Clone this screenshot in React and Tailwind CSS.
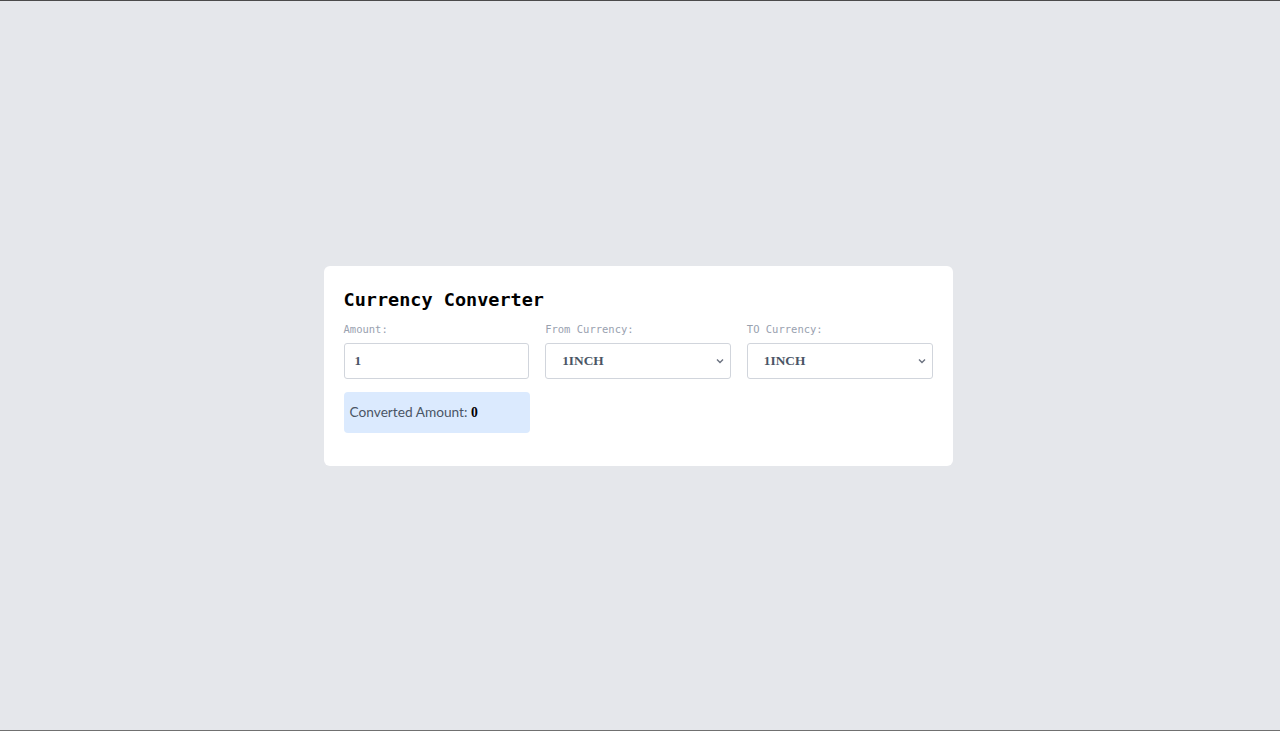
import { useState } from "react";

const currencies = ["1INCH", "AAVE", "ADA", "BTC", "ETH", "EUR", "USD"];

function Chevron() {
  return (
    <svg
      className="pointer-events-none absolute right-[7px] top-[15px]"
      width="8"
      height="6"
      viewBox="0 0 8 6"
      fill="none"
    >
      <path d="M1 1.5L4 4.5L7 1.5" stroke="#6b7280" strokeWidth="1.4" />
    </svg>
  );
}

export default function App() {
  const [amount, setAmount] = useState("1");
  const [from, setFrom] = useState("1INCH");
  const [to, setTo] = useState("1INCH");

  return (
    <div className="box-border flex h-screen items-center justify-center border-t border-b border-t-[#4b4b4b] border-b-[#707070] bg-[#e5e7eb] font-['Liberation_Serif',serif]">
      <div className="mr-[4px] w-[629px] rounded-md bg-white pt-5 pr-5 pb-[33px] pl-5">
        <h1 className="font-['DejaVu_Sans_Mono',monospace] text-[18.5px] font-bold leading-7 text-black">
          Currency Converter
        </h1>

        <div className="mt-[7px] grid grid-cols-3 gap-4">
          <div>
            <label className="block font-['DejaVu_Sans_Mono',monospace] text-[10.5px] leading-4 text-gray-400">
              Amount:
            </label>
            <input
              value={amount}
              onChange={(e) => setAmount(e.target.value)}
              className="mt-[6px] h-9 w-full rounded-[3px] border border-gray-300 px-[10px] text-[13.33px] font-bold text-gray-600 outline-none"
            />
          </div>

          <div>
            <label className="block font-['DejaVu_Sans_Mono',monospace] text-[10.5px] leading-4 text-gray-400">
              From Currency:
            </label>
            <div className="relative mt-[6px]">
              <select
                value={from}
                onChange={(e) => setFrom(e.target.value)}
                className="h-9 w-full appearance-none rounded-[3px] border border-gray-300 bg-white px-4 text-[13.33px] font-bold text-gray-600 outline-none"
              >
                {currencies.map((c) => (
                  <option key={c}>{c}</option>
                ))}
              </select>
              <Chevron />
            </div>
          </div>

          <div>
            <label className="block font-['DejaVu_Sans_Mono',monospace] text-[10.5px] leading-4 text-gray-400">
              TO Currency:
            </label>
            <div className="relative mt-[6px]">
              <select
                value={to}
                onChange={(e) => setTo(e.target.value)}
                className="h-9 w-full appearance-none rounded-[3px] border border-gray-300 bg-white px-4 text-[13.33px] font-bold text-gray-600 outline-none"
              >
                {currencies.map((c) => (
                  <option key={c}>{c}</option>
                ))}
              </select>
              <Chevron />
            </div>
          </div>
        </div>

        <div className="mt-[13px] flex h-[41px] w-[186px] items-center rounded-[4px] bg-[#dbeafe] px-[6px] font-['Lato',sans-serif] text-[13.7px] text-gray-600">
          Converted Amount:&nbsp;
          <span className="mt-[2px] font-['Liberation_Serif',serif] font-bold text-black">0</span>
        </div>
      </div>
    </div>
  );
}
